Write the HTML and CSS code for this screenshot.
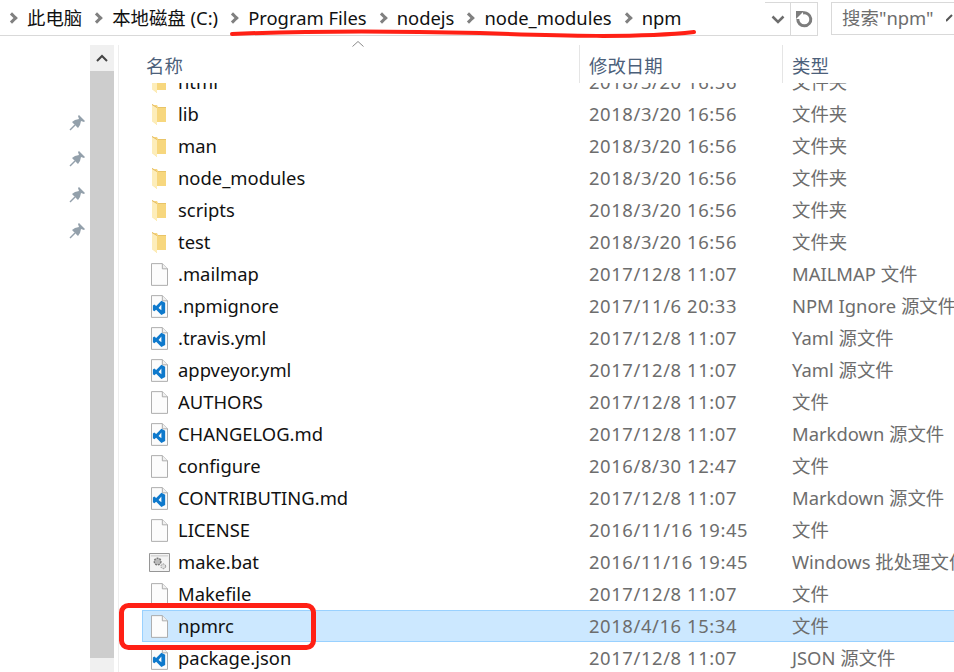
FILE: index.html
```html
<!DOCTYPE html>
<html lang="zh-CN">
<head>
  <meta charset="UTF-8">
  <title>npm</title>
  <link rel="stylesheet" href="styles.css">
</head>
<body>
  <svg width="0" height="0" class="defs">
    <symbol id="folder" viewBox="0 0 14 21">
      <path d="M0 1H5L6 3H14V18H5V21L0 17Z" fill="#f7d77e"/>
      <path d="M0 0L5 3V21L0 17Z" fill="#fdedb9"/>
      <path d="M0 0L5 3V4L0 1Z" fill="#e3b75a"/>
      <path d="M6 3H14V4H6Z" fill="#e8c468"/>
    </symbol>
    <symbol id="file" viewBox="0 0 18 24">
      <path d="M.5.5H12L17.500 6V23.500H.5Z" fill="#fcfcfc" stroke="#a8a8a8"/>
      <path d="M12 .5V6H17.500" fill="#f0f0f0" stroke="#a8a8a8"/>
    </symbol>
    <symbol id="vscode" viewBox="0 0 18 24">
      <path d="M.5.5H12L17.500 6V23.500H.5Z" fill="#fcfcfc" stroke="#a8a8a8"/>
      <path d="M12 .5V6H17.500" fill="#f0f0f0" stroke="#a8a8a8"/>
      <path d="M11 6L15 8V19L11 21L5.500 15.500L3.500 17L2 16V11L3.500 10L5.500 11.500ZM11 10L8 13.500L11 16Z" fill="#0e79cc"/>
    </symbol>
    <symbol id="bat" viewBox="0 0 22 20">
      <path d="M.5.5H21.500V19.500H.5Z" fill="#f4f4f4" stroke="#8f8f8f"/>
      <path d="M2 3H20" stroke="#c4c4c4"/>
      <circle cx="9" cy="9" r="3.500" fill="#bbb" stroke="#777" stroke-width="1.500" stroke-dasharray="2 1"/>
      <circle cx="15" cy="14" r="2.500" fill="#ddd" stroke="#888" stroke-dasharray="1.500 1"/>
    </symbol>
    <symbol id="pin" viewBox="0 0 16 16">
      <path d="M1 15L6 10" fill="none" stroke="#93a0ab" stroke-width="1.500"/>
      <path d="M3 7L6 5L10 4L9 1L10 0L16 6L15 7L12 6L11 10L9 13Z" fill="#93a0ab"/>
    </symbol>
  </svg>

  <div class="addr">
    <div class="crumbs">
      <span class="sep"></span><span class="crumb">此电脑</span>
      <span class="sep"></span><span class="crumb">本地磁盘 (C:)</span>
      <span class="sep"></span><span class="crumb">Program Files</span>
      <span class="sep"></span><span class="crumb">nodejs</span>
      <span class="sep"></span><span class="crumb">node_modules</span>
      <span class="sep"></span><span class="crumb">npm</span>
    </div>
    <div class="addr-tools">
      <div class="drop-wrap">
        <svg width="14" height="9" viewBox="0 0 14 9"><path d="M1.500 1.500L7 7L12.500 1.500" fill="none" stroke="#6d6d6d" stroke-width="2.500"/></svg>
      </div>
      <div class="refresh-wrap">
        <svg width="18" height="18" viewBox="0 0 18 18"><path d="M8 3A6.500 6.500 0 1 1 2.800 9" fill="none" stroke="#7d7d7d" stroke-width="3"/><path d="M1 1H9L1 9Z" fill="#7d7d7d"/></svg>
      </div>
    </div>
    <div class="search">
      <span>搜索"npm"</span>
      <svg class="glass" width="8" height="10" viewBox="0 0 8 10"><path d="M0 9L6 3" stroke="#555" stroke-width="2"/></svg>
    </div>
  </div>

  <div class="main">
    <div class="pins">
      <svg class="pin" width="16" height="16"><use href="#pin"/></svg>
      <svg class="pin" width="16" height="16"><use href="#pin"/></svg>
      <svg class="pin" width="16" height="16"><use href="#pin"/></svg>
      <svg class="pin" width="16" height="16"><use href="#pin"/></svg>
    </div>
    <div class="scrollbar">
      <div class="scroll-btn">
        <svg width="12" height="8" viewBox="0 0 12 8"><path d="M1 7L6 2L11 7" fill="none" stroke="#444" stroke-width="2"/></svg>
      </div>
      <div class="scroll-thumb"></div>
    </div>
    <div class="files">
      <div class="head">
        <svg class="sort" width="12" height="6" viewBox="0 0 12 6"><path d="M.5 5.500L6 .5L11.500 5.500" fill="none" stroke="#8a8a8a"/></svg>
        <div class="col-name">名称</div>
        <div class="col-date">修改日期</div>
        <div class="col-type">类型</div>
      </div>
      <div class="list">
        <div class="rows">
          <div class="row"><svg class="ico-folder"><use href="#folder"/></svg><span class="name">html</span><span class="date">2018/3/20 16:56</span><span class="type">文件夹</span></div>
          <div class="row"><svg class="ico-folder"><use href="#folder"/></svg><span class="name">lib</span><span class="date">2018/3/20 16:56</span><span class="type">文件夹</span></div>
          <div class="row"><svg class="ico-folder"><use href="#folder"/></svg><span class="name">man</span><span class="date">2018/3/20 16:56</span><span class="type">文件夹</span></div>
          <div class="row"><svg class="ico-folder"><use href="#folder"/></svg><span class="name">node_modules</span><span class="date">2018/3/20 16:56</span><span class="type">文件夹</span></div>
          <div class="row"><svg class="ico-folder"><use href="#folder"/></svg><span class="name">scripts</span><span class="date">2018/3/20 16:56</span><span class="type">文件夹</span></div>
          <div class="row"><svg class="ico-folder"><use href="#folder"/></svg><span class="name">test</span><span class="date">2018/3/20 16:56</span><span class="type">文件夹</span></div>
          <div class="row"><svg class="ico-file"><use href="#file"/></svg><span class="name">.mailmap</span><span class="date">2017/12/8 11:07</span><span class="type">MAILMAP 文件</span></div>
          <div class="row"><svg class="ico-file"><use href="#vscode"/></svg><span class="name">.npmignore</span><span class="date">2017/11/6 20:33</span><span class="type">NPM Ignore 源文件</span></div>
          <div class="row"><svg class="ico-file"><use href="#vscode"/></svg><span class="name">.travis.yml</span><span class="date">2017/12/8 11:07</span><span class="type">Yaml 源文件</span></div>
          <div class="row"><svg class="ico-file"><use href="#vscode"/></svg><span class="name">appveyor.yml</span><span class="date">2017/12/8 11:07</span><span class="type">Yaml 源文件</span></div>
          <div class="row"><svg class="ico-file"><use href="#file"/></svg><span class="name">AUTHORS</span><span class="date">2017/12/8 11:07</span><span class="type">文件</span></div>
          <div class="row"><svg class="ico-file"><use href="#vscode"/></svg><span class="name">CHANGELOG.md</span><span class="date">2017/12/8 11:07</span><span class="type">Markdown 源文件</span></div>
          <div class="row"><svg class="ico-file"><use href="#file"/></svg><span class="name">configure</span><span class="date">2016/8/30 12:47</span><span class="type">文件</span></div>
          <div class="row"><svg class="ico-file"><use href="#vscode"/></svg><span class="name">CONTRIBUTING.md</span><span class="date">2017/12/8 11:07</span><span class="type">Markdown 源文件</span></div>
          <div class="row"><svg class="ico-file"><use href="#file"/></svg><span class="name">LICENSE</span><span class="date">2016/11/16 19:45</span><span class="type">文件</span></div>
          <div class="row"><svg class="ico-bat"><use href="#bat"/></svg><span class="name">make.bat</span><span class="date">2016/11/16 19:45</span><span class="type">Windows 批处理文件</span></div>
          <div class="row"><svg class="ico-file"><use href="#file"/></svg><span class="name">Makefile</span><span class="date">2017/12/8 11:07</span><span class="type">文件</span></div>
          <div class="row selected"><svg class="ico-file"><use href="#file"/></svg><span class="name">npmrc</span><span class="date">2018/4/16 15:34</span><span class="type">文件</span></div>
          <div class="row"><svg class="ico-file"><use href="#vscode"/></svg><span class="name">package.json</span><span class="date">2017/12/8 11:07</span><span class="type">JSON 源文件</span></div>
        </div>
      </div>
    </div>
  </div>

  <!-- red marks drawn over the screenshot -->
  <svg class="marks" width="954" height="672" viewBox="0 0 954 672">
    <path d="M232 34C300 31 400 31 480 33C560 36 640 38 694 32" fill="none" stroke="#ff2015" stroke-width="4" stroke-linecap="round"/>
    <rect x="121.500" y="605.500" width="192" height="42" rx="7" fill="none" stroke="#ff2015" stroke-width="5"/>
  </svg>
</body>
</html>
```

FILE: styles.css
```css
* {
  box-sizing: border-box;
}

html, body {
  margin: 0;
  padding: 0;
  height: 100%;
  overflow: hidden;
}

body {
  position: relative;
  display: flex;
  flex-direction: column;
  background: #fff;
  font-family: "Noto Sans", "Noto Sans CJK SC", sans-serif;
  font-size: 18.4px;
  color: #111;
}

.defs {
  position: absolute;
}

/* address bar */
.addr {
  display: flex;
  align-items: stretch;
  height: 36px;
  flex: none;
}

.crumbs {
  display: flex;
  align-items: center;
  width: 766px;
  border-bottom: 1px solid #d9d9d9;
  white-space: nowrap;
}

.crumb {
  line-height: 32px;
}

.sep {
  width: 8px;
  height: 8px;
  margin: 0 11px 0 11px;
  border-top: 3px solid #808080;
  border-right: 3px solid #808080;
  transform: rotate(45deg);
  flex: none;
}

.sep:first-child {
  margin-left: 8px;
}

.addr-tools {
  display: flex;
  width: 53px;
  margin-top: 2px;
  border-top: 1px solid #d9d9d9;
  border-right: 1px solid #d9d9d9;
  border-bottom: 1px solid #d9d9d9;
}

.drop-wrap {
  display: flex;
  align-items: center;
  justify-content: center;
  width: 26px;
  border-right: 1px solid #d9d9d9;
}

.refresh-wrap {
  display: flex;
  flex: 1;
  align-items: center;
  justify-content: center;
}

.search {
  display: flex;
  align-items: center;
  justify-content: space-between;
  width: 123px;
  margin: 2px 0 1px 13px;
  padding: 0 0 3px 10px;
  border: 1px solid #d9d9d9;
  border-right: 0;
  color: #6d6d6d;
  white-space: nowrap;
  overflow: hidden;
}

.main {
  display: flex;
  flex: 1;
  min-height: 0;
  padding-top: 9px;
}

.pins {
  display: flex;
  flex-direction: column;
  gap: 20px;
  width: 90px;
  padding: 70px 0 0 69px;
}

.pin {
  flex: none;
}

.scrollbar {
  display: flex;
  flex-direction: column;
  width: 24px;
  flex: none;
  background: #f0f0f0;
}

.scroll-btn {
  display: flex;
  align-items: center;
  justify-content: center;
  height: 26px;
}

.scroll-thumb {
  height: 587px;
  background: #cdcdcd;
}

.files {
  display: flex;
  flex-direction: column;
  flex: 1;
  min-width: 0;
  margin-left: 4px;
  border-left: 1px solid #eee;
}

.head {
  position: relative;
  display: flex;
  flex: none;
  height: 38px;
  color: #4c607a;
}

.sort {
  position: absolute;
  left: 233px;
  top: -4px;
}

.col-name {
  width: 460px;
  padding: 7px 0 0 27px;
}

.col-date {
  width: 203px;
  padding: 7px 0 0 9px;
  border-left: 1px solid #e5e5e5;
}

.col-type {
  flex: 1;
  padding: 7px 0 0 9px;
  border-left: 1px solid #e5e5e5;
}

.list {
  flex: 1;
  min-height: 0;
  overflow: hidden;
}

/* list is scrolled a little, the first row is cut off by the header */
.rows {
  margin-top: -17px;
  width: 900px;
}

.row {
  display: flex;
  align-items: center;
  height: 32px;
  margin-left: 23px;
  border: 1px solid transparent;
  white-space: nowrap;
}

.row.selected {
  background: #cce8ff;
  border-color: #99d1ff;
}

.row svg {
  flex: none;
}

.ico-folder {
  width: 14px;
  height: 21px;
  margin: 0 12px 0 9px;
}

.ico-file {
  width: 17px;
  height: 23px;
  margin: 0 10px 0 8px;
}

.ico-bat {
  width: 21px;
  height: 19px;
  margin: 0 8px 0 6px;
}

.name {
  flex: none;
  width: 411px;
  margin-bottom: 2px;
  overflow: hidden;
}

.date {
  flex: none;
  width: 203px;
  margin-bottom: 2px;
  color: #6d6d6d;
  letter-spacing: .6px;
}

.type {
  flex: none;
  margin-bottom: 2px;
  color: #6d6d6d;
}

.marks {
  position: absolute;
  left: 0;
  top: 0;
  pointer-events: none;
}
```
